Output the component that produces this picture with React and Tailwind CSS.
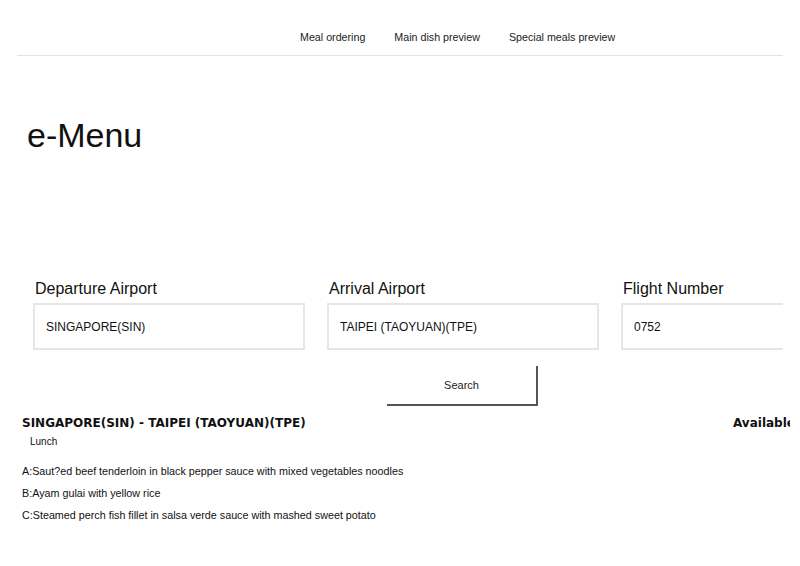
export default function App() {
    const fields = [
        { label: 'Departure Airport', value: 'SINGAPORE(SIN)' },
        { label: 'Arrival Airport', value: 'TAIPEI (TAOYUAN)(TPE)' },
        { label: 'Flight Number', value: '0752' },
    ]

    const dishes = [
        'A:Saut?ed beef tenderloin in black pepper sauce with mixed vegetables noodles',
        'B:Ayam gulai with yellow rice',
        'C:Steamed perch fish fillet in salsa verde sauce with mashed sweet potato',
    ]

    return (
        <div className="w-[800px] h-[566px] bg-white overflow-hidden font-['Liberation_Sans',Arial,sans-serif] text-[#111]">
            <div className="w-[783px] overflow-hidden">
                {/* nav */}
                <nav className="ml-[17px] h-[56px] border-b border-[#dfe3ee] flex items-start pt-[30px] pl-[283px] gap-[29px] text-[10.7px] leading-[14px] text-[#222]">
                    <span>Meal ordering</span>
                    <span>Main dish preview</span>
                    <span>Special meals preview</span>
                </nav>

                <h1 className="ml-[27px] mt-[62px] text-[34px] leading-none font-normal">e-Menu</h1>

                {/* form */}
                <div className="mt-[127px] pl-[33px] flex gap-[22px] w-max">
                    {fields.map((f) => (
                        <div key={f.label} className="w-[272px] shrink-0">
                            <div className="text-[16px] leading-[20px] pl-[2px] mb-[4px]">{f.label}</div>
                            <div className="h-[47px] border-2 border-[#e6e6e6] flex items-center pl-[11px] text-[12px]">
                                {f.value}
                            </div>
                        </div>
                    ))}
                </div>

                <div className="pl-[387px] pt-[16px]">
                    <button className="w-[151px] h-[40px] border-r-2 border-b-2 border-[#555] text-[11px] text-[#222]">
                        Search
                    </button>
                </div>
            </div>

            {/* result, right column runs past the window edge */}
            <div className="mt-[10px] pl-[22px] flex justify-between">
                <div className="font-['DejaVu_Sans',Verdana,sans-serif] font-bold text-[12px] leading-[15px]">
                    SINGAPORE(SIN) - TAIPEI (TAOYUAN)(TPE)
                </div>
                <div className="font-['DejaVu_Sans',Verdana,sans-serif] font-bold text-[12px] leading-[15px] w-[67px] shrink-0 whitespace-nowrap">
                    <div className="w-[57px] overflow-hidden">Available</div>
                </div>
            </div>
            <div className="pl-[30px] mt-[3px] text-[10px]">Lunch</div>

            <div className="pl-[22px] mt-[11px] text-[10.75px] leading-[22px]">
                {dishes.map((d) => (
                    <div key={d}>{d}</div>
                ))}
            </div>
        </div>
    )
}
